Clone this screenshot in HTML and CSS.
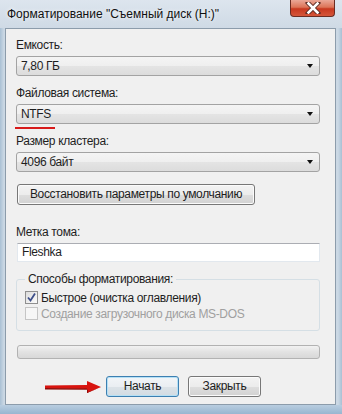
FILE: index.html
```html
<!DOCTYPE html>
<html lang="ru">
<head>
    <meta charset="UTF-8">
    <title>Форматирование</title>
    <link rel="stylesheet" href="styles.css">
</head>
<body>
    <div class="window">
        <div class="titlebar">
            <div class="title">Форматирование "Съемный диск (H:)"</div>
            <div class="close-btn">
                <svg width="16" height="12" viewBox="0 0 16 12">
                    <path d="M3 1 L13 11 M13 1 L3 11" stroke="#5a2a22" stroke-width="4.4" stroke-linecap="square"/>
                    <path d="M3.5 1.5 L12.5 10.5 M12.5 1.5 L3.5 10.5" stroke="#fff" stroke-width="2.6" stroke-linecap="square"/>
                </svg>
            </div>
        </div>
        <div class="client">
            <div class="field">
                <div class="label">Емкость:</div>
                <div class="combo">7,80 ГБ<span class="arrow"></span></div>
            </div>
            <div class="field mark">
                <div class="label">Файловая система:</div>
                <div class="combo">NTFS<span class="arrow"></span></div>
                <div class="red-line"></div>
            </div>
            <div class="field">
                <div class="label">Размер кластера:</div>
                <div class="combo">4096 байт<span class="arrow"></span></div>
            </div>
            <div class="btn restore">Восстановить параметры по умолчанию</div>
            <div class="field volume">
                <div class="label">Метка тома:</div>
                <div class="textbox">Fleshka</div>
            </div>
            <fieldset class="group">
                <legend>Способы форматирования:</legend>
                <div class="check">
                    <span class="box checked">
                        <svg width="11" height="11" viewBox="0 0 11 11">
                            <path d="M2 5.5 L4.5 8.5 L9 1.5" fill="none" stroke="#3d4f8a" stroke-width="1.8"/>
                        </svg>
                    </span>
                    Быстрое (очистка оглавления)
                </div>
                <div class="check disabled">
                    <span class="box"></span>
                    Создание загрузочного диска MS-DOS
                </div>
            </fieldset>
            <div class="progress"></div>
            <div class="actions">
                <svg class="red-arrow" width="60" height="14" viewBox="0 0 60 14">
                    <path d="M0 5.5 L42 5 L42 1 L56 7 L42 13 L42 9 L0 8.5 Z" fill="#d8140f"/>
                    <path d="M0 8 L42 8.5 L42 13 L56 7 L55 7.5 L43 12 L43 9.8 L0 9.5 Z" fill="#8e0a08"/>
                </svg>
                <div class="btn default">Начать</div>
                <div class="btn">Закрыть</div>
            </div>
        </div>
        <div class="bottom-frame"></div>
    </div>
</body>
</html>
```

FILE: styles.css
```css
body {
    margin: 0;
    font-family: "Liberation Sans", Arial, sans-serif;
    font-size: 12px;
    color: #1e1e1e;
}
.window {
    width: 342px;
    height: 414px;
    display: flex;
    flex-direction: column;
    background: linear-gradient(to right, #a9c0d4 0px, #cbd8e4 4px, #d4dee8 50%, #cbd8e4 calc(100% - 4px), #a9c0d4 100%);
}
.titlebar {
    height: 28px;
    display: flex;
    justify-content: space-between;
    background: linear-gradient(to bottom, #dde5ee, #cfdae5);
}
.title {
    padding: 7px 0 0 7px;
    font-size: 12px;
    color: #101010;
    text-shadow: 0 0 4px #fff;
}
.close-btn {
    width: 45px;
    height: 17px;
    margin-right: 7px;
    box-sizing: border-box;
    border: 1px solid #6b2c22;
    border-top: none;
    border-radius: 0 0 4px 4px;
    background: linear-gradient(to bottom, #eaa797 0%, #dc7458 45%, #c8381f 55%, #d4563a 100%);
    display: flex;
    align-items: center;
    justify-content: center;
}
.client {
    flex: 1;
    margin: 0 6px 0 5px;
    border: 1px solid #8c9cab;
    background: #f0f0f0;
    padding: 9px 15px 0 10px;
    display: flex;
    flex-direction: column;
    letter-spacing: -0.35px;
}
.label {
    line-height: 15px;
    margin-bottom: 3px;
}
.field {
    margin-bottom: 10px;
}
.field.mark {
    position: relative;
}
.red-line {
    position: absolute;
    left: -1px;
    bottom: -5px;
    width: 40px;
    height: 2px;
    background: #d81b1b;
}
.combo {
    position: relative;
    height: 20px;
    box-sizing: border-box;
    border: 1px solid #a3a3a3;
    border-radius: 3px;
    background: linear-gradient(to bottom, #f4f4f4 0%, #efefef 50%, #e4e4e4 51%, #dcdcdc 100%);
    padding: 2px 0 0 4px;
    line-height: 15px;
}
.arrow {
    position: absolute;
    right: 6px;
    top: 7px;
    border-left: 3.5px solid transparent;
    border-right: 3.5px solid transparent;
    border-top: 4px solid #111;
}
.btn {
    height: 21px;
    box-sizing: border-box;
    border: 1px solid #777;
    border-radius: 3px;
    background: linear-gradient(to bottom, #f3f3f3 0%, #ececec 50%, #dedede 51%, #d2d2d2 100%);
    line-height: 19px;
    text-align: center;
    box-shadow: inset 0 0 0 1px #fbfbfb;
}
.restore {
    width: 238px;
    margin: 2px 0 0 1px;
}
.field.volume {
    margin-top: 20px;
    margin-bottom: 10px;
}
.textbox {
    height: 19px;
    box-sizing: border-box;
    border: 1px solid #e2e8ee;
    border-top-color: #abadb3;
    background: #fff;
    padding: 1px 0 0 4px;
    line-height: 15px;
    margin-left: 1px;
}
.group {
    margin: 0;
    border: 1px solid #d5dfe5;
    border-radius: 3px;
    padding: 3px 0 9px 8px;
}
.group legend {
    padding: 0 3px;
    margin-left: 0;
    line-height: 14px;
}
.check {
    display: flex;
    align-items: center;
    height: 15px;
    margin-top: 1px;
}
.check .box {
    width: 13px;
    height: 13px;
    box-sizing: border-box;
    border: 1px solid #8f8f8f;
    background: linear-gradient(135deg, #dcdcdc, #fbfbfb);
    margin-right: 3px;
    display: flex;
    align-items: center;
    justify-content: center;
}
.check.disabled {
    color: #a0a0a0;
}
.check.disabled .box {
    border-color: #c5c5c5;
    background: #f6f6f6;
}
.progress {
    margin: 14px 0 0 1px;
    height: 14px;
    box-sizing: border-box;
    border: 1px solid #b2b2b2;
    border-radius: 3px;
    background: linear-gradient(to bottom, #f2f2f2, #e2e2e2 50%, #d8d8d8);
}
.actions {
    position: relative;
    display: flex;
    gap: 9px;
    margin-top: 17px;
    padding-left: 90px;
}
.actions .btn {
    width: 73px;
}
.actions .btn.default {
    border-color: #3c7fb1;
    box-shadow: inset 0 0 0 1px #b5e0f5;
    background: linear-gradient(to bottom, #f2f5f8 0%, #eaeef2 50%, #dce3e8 51%, #d2dbe2 100%);
}
.red-arrow {
    position: absolute;
    left: 29px;
    top: 4px;
}
.bottom-frame {
    height: 9px;
    background: linear-gradient(to bottom, #b9cde0, #98b6d0);
}
```
